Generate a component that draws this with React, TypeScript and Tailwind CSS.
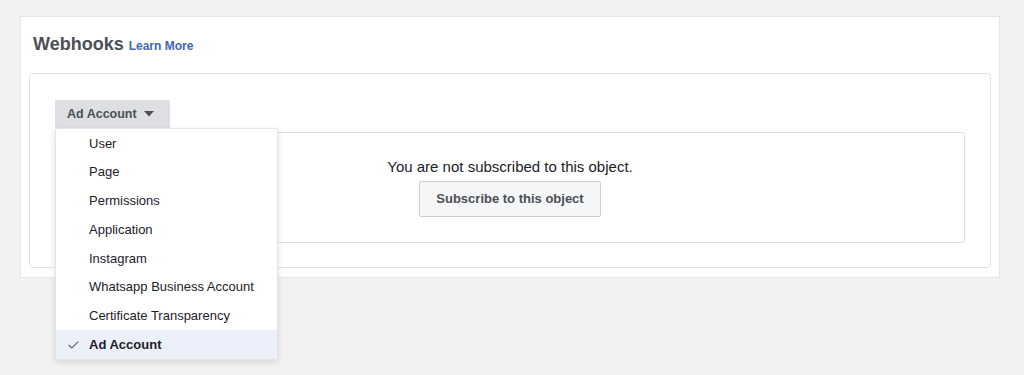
import React from "react";

const items = [
  "User",
  "Page",
  "Permissions",
  "Application",
  "Instagram",
  "Whatsapp Business Account",
  "Certificate Transparency",
  "Ad Account",
];

export default function App() {
  return (
    <div
      className="w-[1024px] h-[375px] bg-[#f2f2f2] pt-[16px] pl-[20px]"
      style={{ fontFamily: '"Liberation Sans", Arial, sans-serif' }}
    >
      <div className="w-[980px] h-[262px] bg-white border border-[#e6e6e6] pt-[13px] px-[8px]">
        <div className="flex items-baseline pl-[4px] h-[28px]">
          <span className="text-[18px] font-bold text-[#4b4f56] leading-[28px]">Webhooks</span>
          <span className="ml-[5px] text-[12px] font-bold text-[#4267b2]">Learn More</span>
        </div>
        <div className="mt-[15px] h-[195px] border border-[#e3e3e3] rounded-[4px] pt-[26px] px-[25px]">
          <div className="relative">
            <button className="h-[28px] w-[115px] bg-[#dddfe2] flex items-center pl-[12px] text-[12.5px] font-bold text-[#4b4f56] rounded-t-[2px]">
              Ad Account
              <svg width="10" height="6" viewBox="0 0 10 6" className="ml-[7px]">
                <path d="M0 0 H10 L5 5.5 Z" fill="#4b4f56" />
              </svg>
            </button>
            <div className="absolute left-0 top-[28px] w-[223px] bg-white rounded-[3px] border border-[#e2e4e7] shadow-[0_2px_6px_rgba(0,0,0,0.12)] z-10 overflow-hidden">
              {items.map((it) => {
                const sel = it === "Ad Account";
                return (
                  <div
                    key={it}
                    className={
                      "h-[28.75px] flex items-center text-[13px] " +
                      (sel ? "bg-[#ecf0fa] font-bold text-[#1d2129]" : "text-[#1d2129]")
                    }
                  >
                    <div className="w-[33px] flex justify-end pr-[10px]">
                      {sel && (
                        <svg width="11" height="8" viewBox="0 0 11 8">
                          <path d="M0.7 4 L3.8 7 L10.3 0.6" fill="none" stroke="#606770" strokeWidth="1.2" />
                        </svg>
                      )}
                    </div>
                    <span>{it}</span>
                  </div>
                );
              })}
            </div>
            <div className="mt-[4px] h-[111px] border border-[#dddfe2] rounded-[3px] flex flex-col items-center pt-[24px]">
              <div className="text-[15px] text-[#1d2129] leading-[20px]">You are not subscribed to this object.</div>
              <button className="mt-[4px] w-[182px] h-[36px] bg-[#f5f6f7] border border-[#ccd0d5] rounded-[2px] text-[13px] font-bold text-[#4b4f56]">
                Subscribe to this object
              </button>
            </div>
          </div>
        </div>
      </div>
    </div>
  );
}
